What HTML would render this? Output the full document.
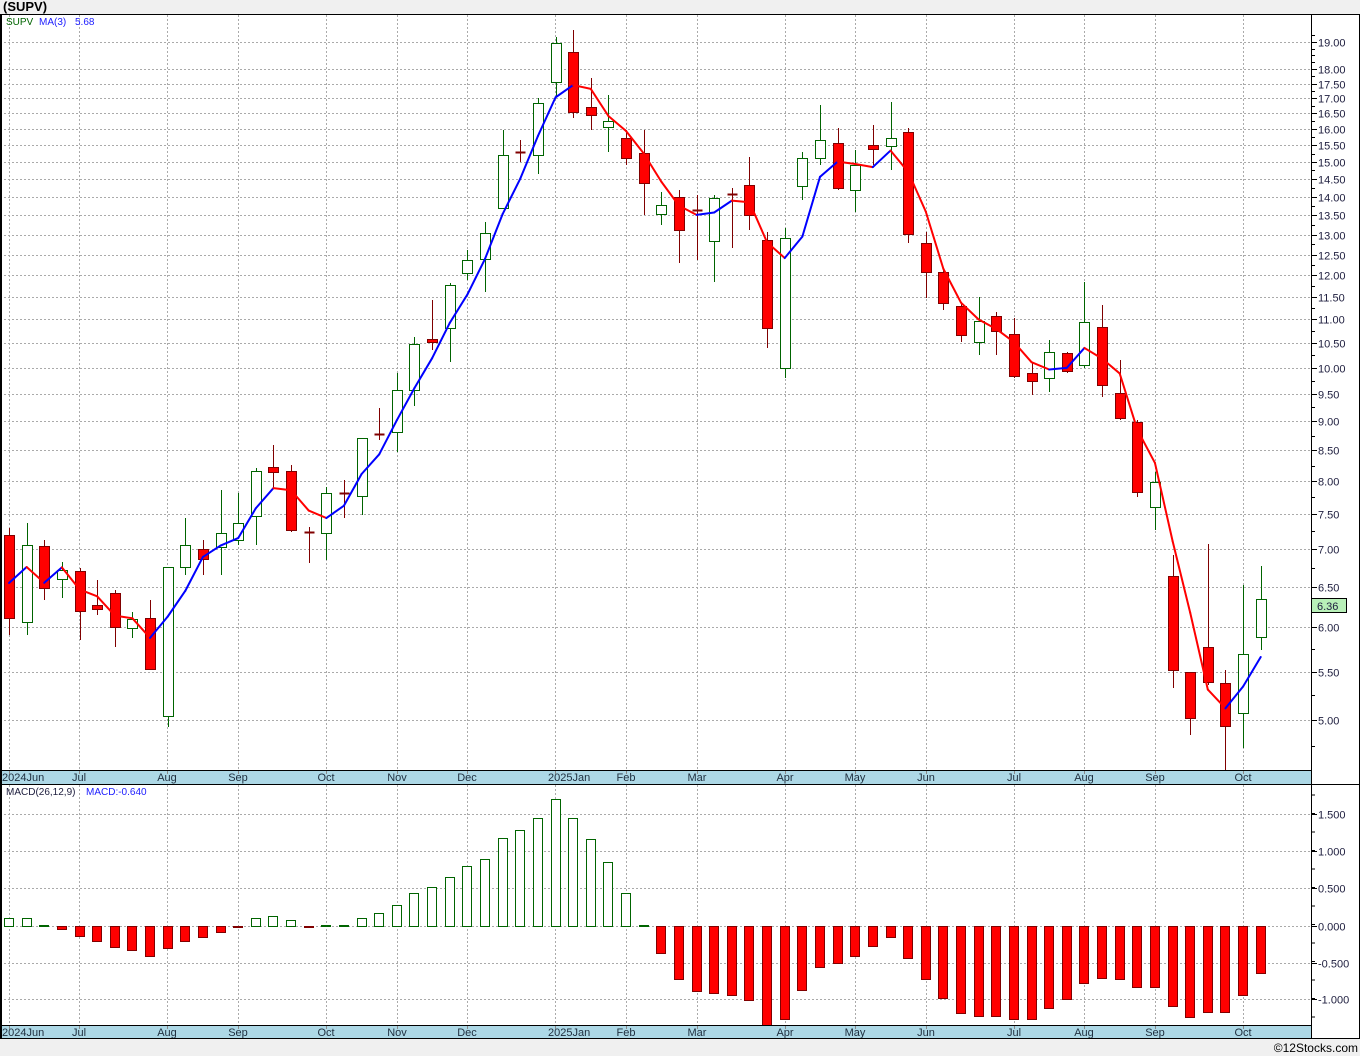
<!DOCTYPE html>
<html><head><meta charset="utf-8"><style>
html,body{margin:0;padding:0;background:#f0f0f0;}
svg{display:block;font-family:"Liberation Sans","DejaVu Sans",sans-serif;}
</style></head><body>
<svg id="s" width="1360" height="1056" xmlns="http://www.w3.org/2000/svg"></svg>
<script>
const c=[
['r',535,618,528,635],['w',545,622,523,635],['r',546,588,540,600],['w',570,579,562,598],['r',571,611,568,640],
['r',605,609,580,615],['r',593,627,590,647],['w',619,628,612,638],['r',618,669,600,669],['w',567,716,567,727],
['w',545,567,518,575],['r',549,559,540,575],['w',533,547,490,575],['w',523,540,493,545],['w',471,516,468,545],
['r',467,472,445,488],['r',471,530,465,532],['d',532,532,527,563],['w',493,533,487,560],['d',493,493,480,518],
['w',438,496,438,515],['d',434,434,408,440],['w',390,432,373,452],['w',344,390,337,406],['r',339,342,300,350],
['w',285,328,283,362],['w',260,273,250,280],['w',233,259,222,292],['w',155,208,130,208],['d',152,152,140,162],
['w',103,155,98,174],['w',43,82,37,97],['r',52,112,30,118],['r',107,115,78,130],['w',121,127,95,152],
['r',138,158,130,165],['r',153,183,130,215],['w',205,214,192,225],['r',197,230,190,263],['d',210,210,195,260],
['w',198,241,195,282],['d',194,194,188,248],['r',185,215,157,230],['r',240,328,232,348],['w',238,368,228,378],
['w',158,186,152,200],['w',140,158,105,165],['r',143,188,128,190],['w',165,190,150,212],['r',145,149,125,165],
['w',138,146,102,170],['r',132,234,128,243],['r',243,272,232,298],['r',272,303,268,310],['r',306,335,302,342],
['w',321,342,297,355],['r',316,331,312,355],['r',334,376,318,378],['r',373,381,362,395],['w',352,378,340,392],
['r',353,371,352,373],['w',322,365,282,368],['r',327,385,305,397],['r',393,418,360,420],['r',422,492,420,497],
['w',482,507,472,530],['r',576,670,555,688],['r',672,718,672,735],['r',647,682,544,685],['r',683,726,670,770],
['w',654,713,585,748],['w',599,637,566,650]];
const m=[918,918,925,929,936,941,947,950,956,948,941,937,932,927,918,916,920,927,925,925,918,913,905,893,887,877,866,859,838,830,818,799,818,839,862,893,925,953,979,991,993,995,1000,1025,1019,990,967,963,956,946,937,958,979,998,1013,1016,1016,1019,1019,1008,999,983,978,979,987,987,1006,1017,1012,1012,995,973];
let h='';
const X=i=>9+17.63*i;
h+='<rect x="0" y="14" width="1312" height="756" fill="#fff"/>';
h+='<rect x="1312" y="14" width="48" height="1025" fill="#fff"/>';
h+='<rect x="0" y="784" width="1312" height="241" fill="#fff"/>';
h+='<rect x="0" y="770" width="1311" height="14" fill="#add8e6"/><rect x="0" y="1025" width="1311" height="14" fill="#add8e6"/>';
h+='<text x="3" y="11" font-size="13" font-weight="bold" fill="#000">(SUPV)</text>';
const mx=[[9,'2024Jun'],[79,'Jul'],[167,'Aug'],[238,'Sep'],[326,'Oct'],[397,'Nov'],[467,'Dec'],[555,'2025Jan'],[626,'Feb'],[697,'Mar'],[785,'Apr'],[855,'May'],[926,'Jun'],[1014,'Jul'],[1084,'Aug'],[1155,'Sep'],[1243,'Oct']];
const g='stroke="#aaa" stroke-dasharray="2,2" stroke-width="1"';
for(const [x,l] of mx){
 h+=`<line x1="${x+.5}" y1="15" x2="${x+.5}" y2="770" ${g}/><line x1="${x+.5}" y1="785" x2="${x+.5}" y2="1025" ${g}/>`;
 h+=`<line x1="${x+.5}" y1="770" x2="${x+.5}" y2="774" stroke="#888"/><line x1="${x+.5}" y1="1025" x2="${x+.5}" y2="1029" stroke="#888"/>`;
 const tx=l.startsWith('20')?x-7:x;
 h+=`<text x="${tx}" y="781" font-size="11" text-anchor="${l.startsWith('20')?'start':'middle'}" fill="#203040">${l}</text><text x="${tx}" y="1036" font-size="11" text-anchor="${l.startsWith('20')?'start':'middle'}" fill="#203040">${l}</text>`;
}
const Y=p=>720-508*Math.log(p/5);
for(let p=5;p<=19.01;p+=0.5){
 if(p==18.5)continue;
 const y=Math.round(Y(p))+.5;
 h+=`<line x1="0" y1="${y}" x2="1311" y2="${y}" ${g}/><line x1="1311" y1="${y}" x2="1317" y2="${y}" stroke="#000"/>`;
 h+=`<text x="1318" y="${y+4}" font-size="11" fill="#202040">${p.toFixed(2)}</text>`;
}
for(let p=4.75;p<19.5;p+=0.25){const y=Math.round(Y(p))+.5;if(y>16&&y<768)h+=`<line x1="1311" y1="${y}" x2="1315" y2="${y}" stroke="#000"/>`;}
const mv=[[1.5,814],[1,851],[.5,888],[0,926],[-.5,963],[-1,999]];
for(const [v,y0] of mv){const y=y0+.5;
 h+=`<line x1="0" y1="${y}" x2="1311" y2="${y}" ${g}/><line x1="1311" y1="${y}" x2="1317" y2="${y}" stroke="#000"/>`;
 h+=`<text x="1318" y="${y+4}" font-size="11" fill="#202040">${v<0?'-':''}${Math.abs(v).toFixed(3)}</text>`;}
for(let y=795;y<1025;y+=18.5)h+=`<line x1="1311" y1="${y}" x2="1315" y2="${y}" stroke="#000"/>`;
for(let i=0;i<c.length;i++){const [t,a,b,wt,wb]=c[i];const x=Math.round(X(i))+.5;
 const col=t=='w'?'#006400':'#800000';
 h+=`<line x1="${x}" y1="${wt}" x2="${x}" y2="${wb}" stroke="${col}"/>`;
 if(t=='d')h+=`<line x1="${x-5}" y1="${a+.5}" x2="${x+5}" y2="${a+.5}" stroke="#800000" stroke-width="2"/>`;
 else h+=`<rect x="${x-5}" y="${a+.5}" width="10" height="${Math.max(b-a,2)}" fill="${t=='w'?'#fff':'#f00'}" stroke="${col}"/>`;}
const cl=c.map(([t,a,b])=>t=='w'?a:b).map(y=>Math.exp((720-y)/508)*5);
let pts=[[X(0),583],[X(1),567]];for(let i=2;i<cl.length;i++)pts.push([X(i),Y((cl[i]+cl[i-1]+cl[i-2])/3)]);
for(let k=1;k<pts.length;k++){const up=pts[k][1]<pts[k-1][1];
 h+=`<line x1="${pts[k-1][0]}" y1="${pts[k-1][1]}" x2="${pts[k][0]}" y2="${pts[k][1]}" stroke="${up?'#0000ff':'#ff0000'}" stroke-width="2" stroke-linecap="round"/>`;}
for(let i=0;i<m.length;i++){const x=Math.round(X(i));const v=m[i];
 if(v<926)h+=`<rect x="${x-4.5}" y="${v+.5}" width="9" height="${926-v}" fill="#fff" stroke="#006400"/>`;
 else if(v>926)h+=`<rect x="${x-4.5}" y="926.5" width="9" height="${v-926}" fill="#f00" stroke="#800000"/>`;
 else h+=`<line x1="${x-4}" y1="926.5" x2="${x+5}" y2="926.5" stroke="#006400"/>`;}
h+='<rect x="0.5" y="14.5" width="1359" height="1024" fill="none" stroke="#000"/>';
h+='<line x1="1311.5" y1="14" x2="1311.5" y2="1039" stroke="#000"/>';
h+='<line x1="0" y1="770.5" x2="1311" y2="770.5" stroke="#000"/><line x1="0" y1="784.5" x2="1360" y2="784.5" stroke="#000"/>';
h+='<line x1="0" y1="1025.5" x2="1311" y2="1025.5" stroke="#000"/><line x1="1" y1="15" x2="1" y2="1039" stroke="#000" stroke-width="2"/>';
h+='<rect x="1311.5" y="598.5" width="35" height="14" fill="#b8f0b8" stroke="#000"/><text x="1317" y="610" font-size="11" fill="#202040">6.36</text>';
h+='<text x="6" y="25" font-size="10" fill="#006400">SUPV</text><text x="39" y="25" font-size="10" fill="#2020ff">MA(3)</text><text x="75" y="25" font-size="10" fill="#2020ff">5.68</text>';
h+='<text x="6" y="795" font-size="10" fill="#202040">MACD(26,12,9)</text><text x="86" y="795" font-size="10" fill="#2020ff">MACD:-0.640</text>';
h+='<text x="1358" y="1052" font-size="12" text-anchor="end" fill="#000">©12Stocks.com</text>';
document.getElementById('s').innerHTML=h;
</script>
</body></html>
